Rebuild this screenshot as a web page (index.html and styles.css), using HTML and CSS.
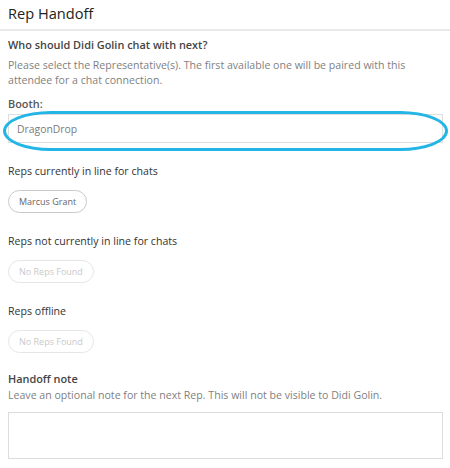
FILE: index.html
```html
<!DOCTYPE html>
<html>
<head>
<meta charset="utf-8">
<link rel="stylesheet" href="styles.css">
</head>
<body>
<div class="panel">
  <header class="head"><h1 class="title">Rep Handoff</h1></header>
  <div class="content">
    <h2 class="question">Who should Didi Golin chat with next?</h2>
    <p class="help">Please select the Representative(s). The first available one will be paired with this attendee for a chat connection.</p>
    <label class="field-label">Booth:</label>
    <div class="input-wrap">
      <div class="input">DragonDrop</div>
    </div>
    <div class="section">
      <div class="section-label">Reps currently in line for chats</div>
      <div class="chips"><span class="chip">Marcus Grant</span></div>
    </div>
    <div class="section">
      <div class="section-label">Reps not currently in line for chats</div>
      <div class="chips"><span class="chip chip-empty">No Reps Found</span></div>
    </div>
    <div class="section">
      <div class="section-label">Reps offline</div>
      <div class="chips"><span class="chip chip-empty">No Reps Found</span></div>
    </div>
    <h2 class="question note-title">Handoff note</h2>
    <p class="help note-help">Leave an optional note for the next Rep. This will not be visible to Didi Golin.</p>
    <div class="textarea"></div>
  </div>
</div>
</body>
</html>
```

FILE: styles.css
```css
* { box-sizing: border-box; }
html, body { margin: 0; padding: 0; background: #fff; }
body { font-family: "Open Sans", "Noto Sans", sans-serif; color: #333; }

.head {
  height: 31px;
  border-bottom: 2px solid #e9e9e9;
  padding: 0 8px;
  display: flex;
  align-items: center;
}
.title {
  margin: 0;
  font-size: 14.6px;
  font-weight: 400;
  color: #222;
  line-height: 20px;
  margin-top: -4px;
}

.content {
  padding: 0 7px 0 8px;
  display: flex;
  flex-direction: column;
}

.question {
  margin: 6px 0 0;
  font-size: 10.9px;
  font-weight: 600;
  color: #444;
  line-height: 16px;
}
.help {
  margin: 5px 0 0;
  font-size: 10.6px;
  line-height: 15px;
  color: #7f7f7f;
}
.field-label {
  margin-top: 8px;
  font-size: 10.9px;
  font-weight: 600;
  color: #555;
  line-height: 16px;
}

.input-wrap {
  position: relative;
  margin-top: 2px;
}
.input {
  height: 29px;
  border: 1px solid #dedede;
  padding: 0 8px;
  display: flex;
  align-items: center;
  font-size: 10.4px;
  color: #7a7a7a;
}
.input-wrap::after {
  content: "";
  position: absolute;
  left: -5px;
  right: -5px;
  top: -3px;
  bottom: -8px;
  border: 3px solid #22b5e6;
  border-radius: 48px / 20px;
  pointer-events: none;
}

.section {
  margin-top: 20px;
  display: flex;
  flex-direction: column;
}
.section-label {
  font-size: 10.6px;
  line-height: 16px;
  color: #333;
}
.chips {
  margin-top: 11px;
  display: flex;
  gap: 6px;
}
.chip {
  height: 23px;
  padding: 0 10px;
  border: 1px solid #c9c9c9;
  border-radius: 12px;
  font-size: 9px;
  color: #666;
  display: inline-flex;
  align-items: center;
}
.chip-empty {
  border-color: #e6e6e6;
  color: #c9c9c9;
}

.note-title { margin-top: 18px; }
.note-help { margin-top: 1px; }

.textarea {
  margin-top: 9px;
  height: 47px;
  border: 1px solid #dcdcdc;
}
```
